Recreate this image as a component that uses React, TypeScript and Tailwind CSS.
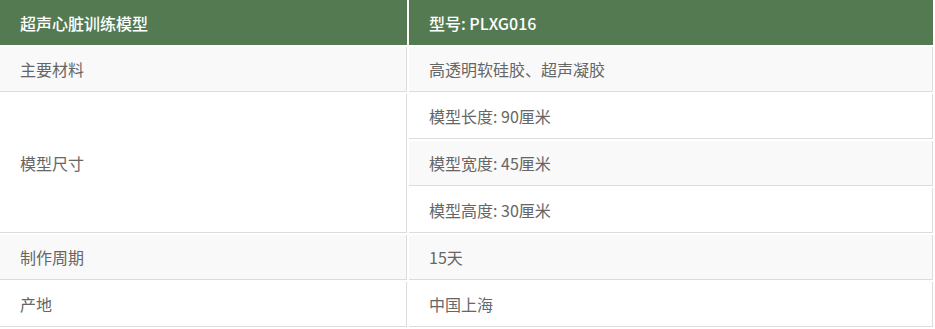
import React from 'react';

const rows: Array<{ label?: string; span?: number; value: string; shade: boolean }> = [
  { label: '主要材料', value: '高透明软硅胶、超声凝胶', shade: true },
  { label: '模型尺寸', span: 3, value: '模型长度: 90厘米', shade: false },
  { value: '模型宽度: 45厘米', shade: true },
  { value: '模型高度: 30厘米', shade: false },
  { label: '制作周期', value: '15天', shade: true },
  { label: '产地', value: '中国上海', shade: false },
];

export default function App() {
  return (
    <div className="w-[935px] h-[329px] overflow-hidden bg-white font-['Noto_Sans_CJK_SC',sans-serif]">
      <table className="w-[937px] -mt-[2px] -ml-[2px] border-separate border-spacing-[2px] table-fixed text-[16px]">
        <colgroup>
          <col className="w-[407px]" />
          <col />
        </colgroup>
        <thead>
          <tr className="h-[45px]">
            <th className="bg-[#547a52] text-white text-left font-medium px-5 py-0 align-middle">超声心脏训练模型</th>
            <th className="bg-[#547a52] text-white text-left font-medium px-5 py-0 align-middle">型号: PLXG016</th>
          </tr>
        </thead>
        <tbody>
          {rows.map((row, i) => (
            <tr key={i} className="h-[45px]">
              {row.label && (
                <td
                  rowSpan={row.span ?? 1}
                  className={`px-5 py-0 align-middle text-[#666] border-r border-b border-[#dcdcdc] ${
                    row.span ? 'bg-white' : row.shade ? 'bg-[#f9f9f9]' : 'bg-white'
                  }`}
                >
                  {row.label}
                </td>
              )}
              <td
                className={`px-5 py-0 align-middle text-[#666] border-r border-b border-[#dcdcdc] ${
                  row.shade ? 'bg-[#f9f9f9]' : 'bg-white'
                }`}
              >
                {row.value}
              </td>
            </tr>
          ))}
        </tbody>
      </table>
    </div>
  );
}
